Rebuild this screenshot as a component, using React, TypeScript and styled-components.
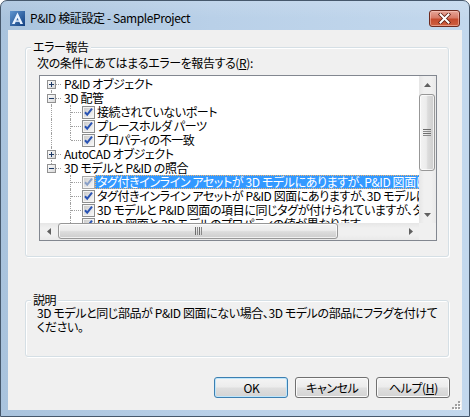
import React from "react";
import styled, { createGlobalStyle } from "styled-components";

const FONT = `"Noto Sans CJK JP", "Noto Sans CJK SC", "Noto Sans", sans-serif`;

const Global = createGlobalStyle`
  html, body { margin: 0; padding: 0; background: #ffffff; }
  body {
    font-family: ${FONT};
    font-size: 12px;
    color: #000;
    font-feature-settings: "palt" 1;
    letter-spacing: -0.4px;
  }
`;

const Window = styled.div`
  box-sizing: border-box;
  width: 470px;
  height: 417px;
  border: 1px solid #46586c;
  border-radius: 7px 7px 0 0;
  background: linear-gradient(to right, #a9c3dd 0%, #b9d0e8 45%, #c3d8ed 100%);
  display: flex;
  flex-direction: column;
  overflow: hidden;
`;

const TitleBar = styled.div`
  height: 29px;
  flex: none;
  display: flex;
  align-items: center;
  padding: 5px 9px 0 9px;
  box-sizing: border-box;
  background: linear-gradient(to bottom, rgba(255,255,255,0.12), rgba(255,255,255,0) 60%);
`;

const TitleText = styled.span`
  margin-left: 5px;
  font-size: 12px;
  line-height: 14px;
  color: #000;
  flex: 1;
  white-space: nowrap;
`;

const CloseButton = styled.div`
  width: 31px;
  height: 17px;
  box-sizing: border-box;
  border: 1px solid #6e2a1e;
  border-radius: 3px;
  background: linear-gradient(to bottom, #e6a699 0%, #d87b67 45%, #c54b2e 55%, #cf6040 100%);
  box-shadow: inset 0 0 0 1px rgba(255, 210, 200, 0.5);
  display: flex;
  align-items: center;
  justify-content: center;
  margin-top: 1px;
`;

const FrameBody = styled.div`
  flex: 1;
  display: flex;
  padding: 0 7px 7px 7px;
`;

const Client = styled.div`
  flex: 1;
  background: #f0f0f0;
  display: flex;
  flex-direction: column;
`;

const Group = styled.div<{ $h: number; $top: number }>`
  position: relative;
  box-sizing: border-box;
  height: ${(p) => p.$h}px;
  margin: ${(p) => p.$top}px 13px 0 17px;
  border: 1px solid #d5dfe5;
  border-radius: 3px;
  box-shadow: inset 1px 1px 0 #ffffff, 1px 1px 0 #ffffff;
  padding: ${(p) => (p.$h > 100 ? 8 : 5)}px 11px 0 11px;
`;

const Legend = styled.span`
  position: absolute;
  top: -8px;
  left: 5px;
  padding: 0 2px;
  background: #f0f0f0;
  line-height: 14px;
  white-space: nowrap;
`;

const Line = styled.div`
  line-height: 14px;
  white-space: nowrap;
`;

const Underline = styled.span`
  text-decoration: underline;
`;

const TreeFrame = styled.div`
  margin: 5px 0 0 2px;
  width: 398px;
  height: 166px;
  box-sizing: border-box;
  border: 1px solid #828790;
  background: #ffffff;
  display: grid;
  grid-template-columns: 379px 17px;
  grid-template-rows: 147px 17px;
`;

const TreeContent = styled.div`
  overflow: hidden;
  padding-top: 1px;
`;

const Row = styled.div`
  display: flex;
  align-items: center;
  height: 14px;
  white-space: nowrap;
`;

type V = "full" | "top" | "bottom" | "none";

const Gutter = styled.span<{ $w: number; $x: number; $v: V; $branch: boolean }>`
  position: relative;
  flex: none;
  width: ${(p) => p.$w}px;
  height: 14px;
  display: flex;
  align-items: center;
  &::before {
    content: "";
    display: ${(p) => (p.$v === "none" ? "none" : "block")};
    position: absolute;
    left: ${(p) => p.$x}px;
    top: ${(p) => (p.$v === "bottom" ? 7 : 0)}px;
    bottom: ${(p) => (p.$v === "top" ? 7 : 0)}px;
    border-left: 1px dotted #a0a0a0;
  }
  &::after {
    content: "";
    display: ${(p) => (p.$branch ? "block" : "none")};
    position: absolute;
    left: ${(p) => p.$x + 1}px;
    right: 0;
    top: 7px;
    border-top: 1px dotted #a0a0a0;
  }
`;

const Expander = styled.span`
  position: relative;
  z-index: 1;
  margin-left: 7px;
  width: 9px;
  height: 9px;
  display: flex;
`;

const CheckWrap = styled.span`
  flex: none;
  width: 13px;
  height: 13px;
  margin-left: 1px;
  display: flex;
`;

const Label = styled.span<{ $selected?: boolean; $gap: number }>`
  margin-left: ${(p) => p.$gap}px;
  height: 14px;
  box-sizing: border-box;
  line-height: 12px;
  padding: 0 1px;
  border: 1px dotted ${(p) => (p.$selected ? "#f2b36a" : "transparent")};
  background: ${(p) => (p.$selected ? "#3399ff" : "transparent")};
  color: ${(p) => (p.$selected ? "#ffffff" : "#000000")};
`;

const VScroll = styled.div`
  display: flex;
  flex-direction: column;
  background: linear-gradient(to right, #e6e6e6, #f0f0f0 30%, #f0f0f0 70%, #e9e9e9);
`;

const HScroll = styled.div`
  display: flex;
  align-items: stretch;
  background: linear-gradient(to bottom, #e6e6e6, #f0f0f0 30%, #f0f0f0 70%, #e9e9e9);
`;

const ArrowCell = styled.div`
  flex: none;
  width: 17px;
  height: 17px;
  display: flex;
  align-items: center;
  justify-content: center;
`;

const VThumb = styled.div`
  height: 77px;
  margin: 1px 1px 0 0;
  box-sizing: border-box;
  border: 1px solid #979797;
  border-radius: 3px;
  background: linear-gradient(to right, #f3f3f3 0%, #ececec 45%, #dcdcdc 55%, #cdcdcd 100%);
  box-shadow: inset 0 0 0 1px rgba(255,255,255,0.7);
  display: flex;
  align-items: center;
  justify-content: center;
`;

const HThumb = styled.div`
  width: 280px;
  margin: 0 0 1px 1px;
  box-sizing: border-box;
  border: 1px solid #979797;
  border-radius: 3px;
  background: linear-gradient(to bottom, #f3f3f3 0%, #ececec 45%, #dcdcdc 55%, #cdcdcd 100%);
  box-shadow: inset 0 0 0 1px rgba(255,255,255,0.7);
  display: flex;
  align-items: center;
  justify-content: center;
`;

const Spacer = styled.div`
  flex: 1;
`;

const Corner = styled.div`
  background: #f0f0f0;
`;

const DescText = styled.div`
  line-height: 14px;
  white-space: nowrap;
`;

const ButtonRow = styled.div`
  margin-top: 20px;
  display: flex;
  justify-content: flex-end;
  gap: 7px;
  padding-right: 12px;
`;

const Button = styled.div<{ $default?: boolean }>`
  width: 74px;
  height: 21px;
  box-sizing: border-box;
  border: 1px solid ${(p) => (p.$default ? "#3c7fb1" : "#707070")};
  border-radius: 3px;
  background: linear-gradient(to bottom, #f4f4f4 0%, #ececec 48%, #dfdfdf 52%, #d3d3d3 100%);
  box-shadow: inset 0 0 0 1px ${(p) => (p.$default ? "#bfe6fb" : "#fbfbfb")};
  display: flex;
  align-items: center;
  justify-content: center;
  line-height: 14px;
  font-size: 12px;
  white-space: nowrap;
`;

const GripRow = styled.div`
  margin-top: 3px;
  display: flex;
  justify-content: flex-end;
  padding-right: 1px;
`;

const AppIcon = () => (
  <svg width="15" height="15" viewBox="0 0 15 15">
    <defs>
      <linearGradient id="ai" x1="0" y1="0" x2="1" y2="1">
        <stop offset="0" stopColor="#5f95d0" />
        <stop offset="1" stopColor="#123f80" />
      </linearGradient>
    </defs>
    <rect x="0" y="0" width="15" height="15" fill="url(#ai)" />
    <polygon points="7.5,1.5 13,13 10.3,13 7.5,6.8 4.7,13 2,13" fill="#e8f2ff" />
    <rect x="5.4" y="9.4" width="4.2" height="1.4" fill="#e8f2ff" />
  </svg>
);

const CloseGlyph = () => (
  <svg width="13" height="11" viewBox="0 0 13 11">
    <path d="M2.5 1.5 L10.5 9.5 M10.5 1.5 L2.5 9.5" stroke="#5a1c10" strokeWidth="3.6" strokeLinecap="square" />
    <path d="M2.5 1.5 L10.5 9.5 M10.5 1.5 L2.5 9.5" stroke="#ffffff" strokeWidth="2" strokeLinecap="square" />
  </svg>
);

const ExpanderBox = ({ open }: { open: boolean }) => (
  <svg width="9" height="9" viewBox="0 0 9 9">
    <defs>
      <linearGradient id="eb" x1="0" y1="0" x2="1" y2="1">
        <stop offset="0" stopColor="#ffffff" />
        <stop offset="1" stopColor="#d6d6d6" />
      </linearGradient>
    </defs>
    <rect x="0.5" y="0.5" width="8" height="8" fill="url(#eb)" stroke="#919191" />
    <rect x="2" y="4" width="5" height="1" fill="#1e3a66" />
    {!open && <rect x="4" y="2" width="1" height="5" fill="#1e3a66" />}
  </svg>
);

const CheckBox = ({ faded }: { faded?: boolean }) => (
  <svg width="13" height="13" viewBox="0 0 13 13">
    <defs>
      <linearGradient id={faded ? "cbf" : "cb"} x1="0" y1="0" x2="1" y2="1">
        <stop offset="0" stopColor={faded ? "#d0d0d0" : "#cbcbcb"} />
        <stop offset="1" stopColor={faded ? "#f4f4f4" : "#f6f6f6"} />
      </linearGradient>
    </defs>
    <rect x="0.5" y="0.5" width="12" height="12" fill="#f4f4f4" stroke={faded ? "#a8a8a8" : "#8e8f8f"} />
    <rect x="2" y="2" width="9" height="9" fill={`url(#${faded ? "cbf" : "cb"})`} />
    <path d="M3 6.2 L5.2 8.6 L10 2.6" fill="none" stroke={faded ? "#8aa0c8" : "#2a54b4"} strokeWidth="2" />
  </svg>
);

const UpArrow = () => (
  <svg width="7" height="4" viewBox="0 0 7 4"><polygon points="3.5,0 7,4 0,4" fill="#606060" /></svg>
);
const DownArrow = () => (
  <svg width="7" height="4" viewBox="0 0 7 4"><polygon points="0,0 7,0 3.5,4" fill="#606060" /></svg>
);
const LeftArrow = () => (
  <svg width="4" height="7" viewBox="0 0 4 7"><polygon points="4,0 4,7 0,3.5" fill="#606060" /></svg>
);
const RightArrow = () => (
  <svg width="4" height="7" viewBox="0 0 4 7"><polygon points="0,0 0,7 4,3.5" fill="#606060" /></svg>
);

const HGrip = () => (
  <svg width="8" height="7" viewBox="0 0 8 7">
    {[0, 2, 4, 6].map((y) => (
      <rect key={y} x="0" y={y} width="8" height="1" fill={y % 4 === 0 ? "#6d6d6d" : "#8a8a8a"} />
    ))}
  </svg>
);
const VGrip = () => (
  <svg width="7" height="8" viewBox="0 0 7 8">
    {[0, 2, 4, 6].map((x) => (
      <rect key={x} x={x} y="0" width="1" height="8" fill={x % 4 === 0 ? "#6d6d6d" : "#8a8a8a"} />
    ))}
  </svg>
);

const SizeGrip = () => (
  <svg width="9" height="9" viewBox="0 0 9 9">
    {[
      [6, 0], [3, 3], [6, 3], [0, 6], [3, 6], [6, 6],
    ].map(([x, y]) => (
      <g key={`${x}-${y}`}>
        <rect x={x + 1} y={y + 1} width="2" height="2" fill="#ffffff" />
        <rect x={x} y={y} width="2" height="2" fill="#a0a0a0" />
      </g>
    ))}
  </svg>
);

type Node = {
  level: 0 | 1;
  text: string;
  open?: boolean;
  v0: V;
  v1?: V;
  selected?: boolean;
};

const nodes: Node[] = [
  { level: 0, text: "P&ID オブジェクト", open: false, v0: "bottom" },
  { level: 0, text: "3D 配管", open: true, v0: "full" },
  { level: 1, text: "接続されていないポート", v0: "full", v1: "full" },
  { level: 1, text: "プレースホルダ パーツ", v0: "full", v1: "full" },
  { level: 1, text: "プロパティの不一致", v0: "full", v1: "top" },
  { level: 0, text: "AutoCAD オブジェクト", open: false, v0: "full" },
  { level: 0, text: "3D モデルと P&ID の照合", open: true, v0: "top" },
  { level: 1, text: "タグ付きインライン アセットが 3D モデルにありますが、P&ID 図面にはありません", v0: "none", v1: "full", selected: true },
  { level: 1, text: "タグ付きインライン アセットが P&ID 図面にありますが、3D モデルにはありません", v0: "none", v1: "full" },
  { level: 1, text: "3D モデルと P&ID 図面の項目に同じタグが付けられていますが、タイプが異なります", v0: "none", v1: "full" },
  { level: 1, text: "P&ID 図面と 3D モデルのプロパティの値が異なります", v0: "none", v1: "full" },
];

const TreeRow = ({ n }: { n: Node }) =>
  n.level === 0 ? (
    <Row>
      <Gutter $w={21} $x={11} $v={n.v0} $branch>
        <Expander>
          <ExpanderBox open={!!n.open} />
        </Expander>
      </Gutter>
      <Label $gap={1}>{n.text}</Label>
    </Row>
  ) : (
    <Row>
      <Gutter $w={21} $x={11} $v={n.v0} $branch={false} />
      <Gutter $w={20} $x={9} $v={n.v1 || "none"} $branch />
      <CheckWrap>
        <CheckBox faded={n.selected} />
      </CheckWrap>
      <Label $gap={0} $selected={n.selected}>{n.text}</Label>
    </Row>
  );

export default function App() {
  return (
    <>
      <Global />
      <Window>
        <TitleBar>
          <AppIcon />
          <TitleText>P&amp;ID 検証設定 - SampleProject</TitleText>
          <CloseButton>
            <CloseGlyph />
          </CloseButton>
        </TitleBar>
        <FrameBody>
          <Client>
            <Group $h={210} $top={17}>
              <Legend>エラー報告</Legend>
              <Line>
                次の条件にあてはまるエラーを報告する(<Underline>R</Underline>):
              </Line>
              <TreeFrame>
                <TreeContent>
                  {nodes.map((n, i) => (
                    <TreeRow key={i} n={n} />
                  ))}
                </TreeContent>
                <VScroll>
                  <ArrowCell>
                    <UpArrow />
                  </ArrowCell>
                  <VThumb>
                    <HGrip />
                  </VThumb>
                  <Spacer />
                  <ArrowCell>
                    <DownArrow />
                  </ArrowCell>
                </VScroll>
                <HScroll>
                  <ArrowCell>
                    <LeftArrow />
                  </ArrowCell>
                  <HThumb>
                    <VGrip />
                  </HThumb>
                  <Spacer />
                  <ArrowCell>
                    <RightArrow />
                  </ArrowCell>
                </HScroll>
                <Corner />
              </TreeFrame>
            </Group>
            <Group $h={57} $top={43}>
              <Legend>説明</Legend>
              <DescText>
                3D モデルと同じ部品が P&amp;ID 図面にない場合、3D モデルの部品にフラグを付けて
                <br />
                ください。
              </DescText>
            </Group>
            <ButtonRow>
              <Button $default>OK</Button>
              <Button>キャンセル</Button>
              <Button>
                ヘルプ(<Underline>H</Underline>)
              </Button>
            </ButtonRow>
            <GripRow>
              <SizeGrip />
            </GripRow>
          </Client>
        </FrameBody>
      </Window>
    </>
  );
}
